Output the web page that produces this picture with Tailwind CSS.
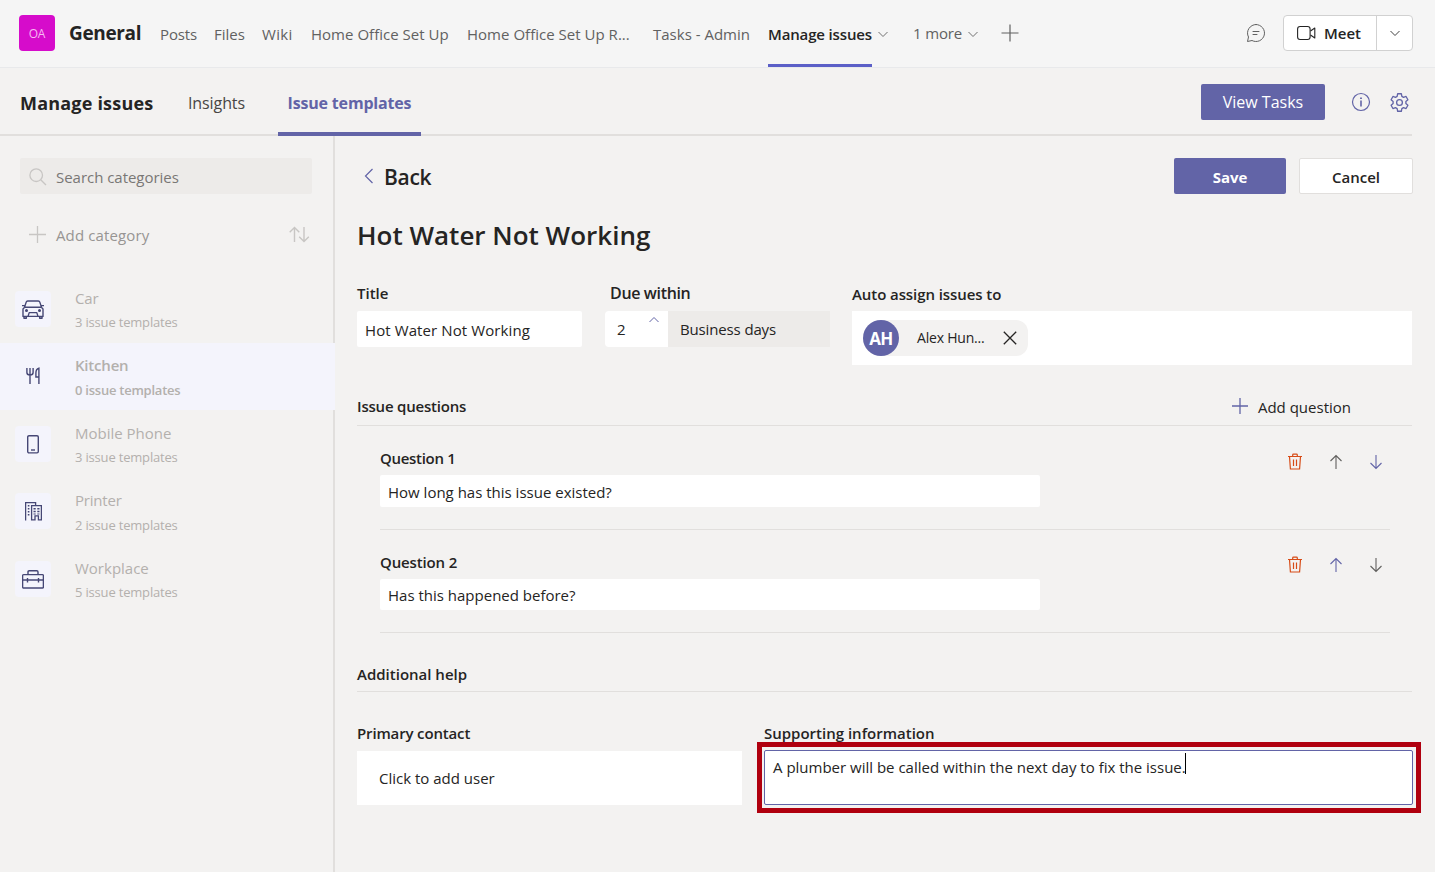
<!DOCTYPE html>
<html lang="en">
<head>
<meta charset="utf-8">
<title>Manage issues</title>
<script src="https://cdn.jsdelivr.net/npm/@tailwindcss/browser@4"></script>
</head>
<body class="flex h-[872px] w-[1435px] flex-col overflow-hidden bg-[#f3f2f1] font-['Open_Sans',sans-serif] text-[15px] leading-5 whitespace-nowrap text-[#252423]">

<header class="flex h-17 shrink-0 items-center border-b border-[#e8e9eb] bg-[#f5f5f5] pr-[22px] pl-[19px] text-[#616161]">
  <div class="mt-[-1px] flex size-9 items-center justify-center rounded bg-[#d60ccb] pt-[2px] text-[12px] tracking-[-0.3px] text-[#f6b8f2]">OA</div>
  <h1 class="-mt-[2px] ml-[14px] w-[91px] text-[19px] font-bold tracking-[-0.35px] text-[#242424]">General</h1>
  <nav class="flex h-full pt-6">
    <a class="w-[54px] tracking-[-0.14px]">Posts</a>
    <a class="w-12">Files</a>
    <a class="w-[49px] tracking-[0.3px]">Wiki</a>
    <a class="w-[156px] tracking-[0.02px]">Home Office Set Up</a>
    <a class="w-[186px] tracking-[0.02px]">Home Office Set Up R...</a>
    <a class="w-[115px]">Tasks - Admin</a>
    <a class="h-[43px] w-[104px] border-b-3 border-[#5b5fc7] font-semibold tracking-[-0.15px] text-[#242424]">Manage issues</a>
  </nav>
  <svg class="ml-[5px]" width="12" height="12" viewBox="0 0 12 12" fill="none" stroke="#707070"><path d="M1.500 4 6 8.500 10.500 4"/></svg>
  <span class="-mt-[1px] ml-[24px] w-[54px] tracking-[-0.16px]">1 more</span>
  <svg width="12" height="12" viewBox="0 0 12 12" fill="none" stroke="#707070"><path d="M1.500 4 6 8.500 10.500 4"/></svg>
  <svg class="-mt-[2px] ml-[22px]" width="18" height="18" viewBox="0 0 18 18" fill="none" stroke="#616161" stroke-width="1.200"><path d="M9 .5v17M.500 9h17"/></svg>
  <svg class="-mt-[1px] ml-auto" width="20" height="20" viewBox="0 0 20 20" fill="none" stroke="#616161" stroke-linecap="round" stroke-linejoin="round"><path d="M10 1.500a8.500 8.500 0 1 1-4 16L1.500 18.500l1-4.500A8.500 8.500 0 0 1 10 1.500ZM7 8.500h6M7 11.500h4"/></svg>
  <div class="-mt-[1px] ml-[17px] flex h-9 w-[130px] items-center rounded border border-[#d1d1d1] bg-white font-semibold text-[#242424]">
    <div class="flex h-full w-[93px] items-center border-r border-[#d1d1d1] pl-[13px]">
      <svg width="19" height="16" viewBox="0 0 19 16" fill="none" stroke="#242424" stroke-width="1.100" stroke-linejoin="round"><rect x=".6" y="1.500" width="12.500" height="13" rx="2.500"/><path d="m13.500 6 4.300-3v10l-4.300-3"/></svg>
      <span class="ml-2">Meet</span>
    </div>
    <svg class="ml-3" width="12" height="12" viewBox="0 0 12 12" fill="none" stroke="#424242"><path d="M1.500 4 6 8.500 10.500 4"/></svg>
  </div>
</header>

<div class="mr-[23px] flex h-17 shrink-0 items-center border-b-2 border-[#e1dfdd] pl-5">
  <h2 class="mt-1 w-[168px] text-[18px] font-bold tracking-[0.2px]">Manage issues</h2>
  <a class="mt-1 w-[90px] text-[16px] tracking-[-0.1px] text-[#484644]">Insights</a>
  <a class="-mb-[2px] flex h-16 w-[143px] items-center justify-center self-end border-b-4 border-[#6264a7] pt-[2px] text-[16px] font-bold tracking-[-0.18px] text-[#6264a7]">Issue templates</a>
  <button class="mt-[2px] ml-auto h-9 w-[124px] rounded-xs bg-[#6264a7] text-[16px] font-medium text-white">View Tasks</button>
  <svg class="mt-[2px] ml-[26px]" width="20" height="20" viewBox="0 0 20 20" fill="none" stroke="#6264a7" stroke-width="1.200"><circle cx="10" cy="10" r="8.500"/><path d="M10 8.500v6" stroke-width="1.600"/><path d="M10 5.500v1.600" stroke-width="1.800"/></svg>
  <svg class="mt-[2px] mr-[2px] ml-[18px]" width="21" height="21" viewBox="0 0 24 24" fill="none" stroke="#6264a7" stroke-width="1.500" stroke-linejoin="round"><circle cx="12" cy="12" r="3.300"/><path d="M9.900 2h4.200l.6 3 1.900 1.100 2.900-1 2.100 3.700-2.300 2v2.400l2.300 2-2.100 3.700-2.900-1-1.900 1.100-.6 3H9.900l-.6-3-1.900-1.100-2.900 1-2.100-3.700 2.300-2v-2.400l-2.300-2 2.100-3.700 2.900 1L9.300 5z"/></svg>
</div>

<div class="flex min-h-0 flex-1">
  <aside class="flex w-[335px] flex-col border-r-2 border-[#e1dfdd] pt-[22px] text-[#b3b0ad]">
    <div class="ml-5 flex h-9 w-[292px] items-center rounded-xs bg-[#edebe9] pl-[9px] text-[#797775]">
      <svg class="mt-px" width="18" height="18" viewBox="0 0 18 18" fill="none" stroke="#c8c6c4" stroke-width="1.300"><circle cx="7.200" cy="7.200" r="6.300"/><path d="m11.700 11.700 5.300 5.300"/></svg>
      <span class="mt-[2px] ml-[9px] tracking-[-0.03px]">Search categories</span>
    </div>
    <div class="mt-[31px] ml-[29px] flex h-5 w-[281px] items-center text-[#979593]">
      <svg width="18" height="18" viewBox="0 0 18 18" fill="none" stroke="#c8c6c4" stroke-width="1.300"><path d="M8.500 0v17M0 8.500h17"/></svg>
      <span class="ml-[9px] tracking-[0.12px]">Add category</span>
      <svg class="-mt-px ml-auto" width="21" height="17" viewBox="0 0 21 17" fill="none" stroke="#c8c6c4" stroke-width="1.400"><path d="M5.500 16V1.500M.7 6.300l4.800-4.800 4.800 4.800M15 1v14.500m-4.800-4.800 4.800 4.800 4.800-4.800"/></svg>
    </div>
    <ul class="mt-[30.500px]">
      <li class="flex h-[67.5px] pl-[15px]">
        <div class="mt-[15.500px] flex size-9 items-center justify-center rounded bg-[#f4f4fc]">
          <svg class="mt-[2px]" width="22" height="20" viewBox="0 0 22 20" fill="none" stroke="#464775" stroke-width="1.400" stroke-linejoin="round"><path d="M2.500 7.200 4.200 2.100Q4.500 1 5.700 1h10.600q1.200 0 1.500 1.100l1.700 5.100M0 5.600h2.600M19.400 5.600H22M2.600 7.200h16.800L21 9v7.400H1V9zM6 16.400l1.200-3.800h7.600l1.200 3.800"/><path d="M2 16.800v1.400h2.300v-1.400M17.700 16.800v1.400H20v-1.400" stroke-width="1.500"/><circle cx="4.500" cy="10.600" r=".8" fill="#464775"/><circle cx="17.500" cy="10.600" r=".8" fill="#464775"/></svg>
        </div>
        <div class="ml-6 pt-3"><p class="tracking-[-0.2px]">Car</p><p class="mt-1 text-[13px] tracking-[-0.18px]">3 issue templates</p></div>
      </li>
      <li class="-mr-[2px] flex h-[67px] mb-[.5px] bg-[#f4f4fc] pl-[15px] font-semibold">
        <div class="mt-[15px] flex size-9 items-center justify-center rounded bg-[#f4f4fc]">
          <svg class="-mt-px" width="14" height="18" viewBox="0 0 14 18" fill="none" stroke="#464775" stroke-width="1.400"><path d="M.9 1v4.500Q.9 8 4 8t3.100-2.500V1M4 1v16M12.900 17V1.200q-3 .8-3 4.800v4h3"/></svg>
        </div>
        <div class="ml-6 pt-3"><p class="tracking-[-0.2px]">Kitchen</p><p class="mt-[5px] text-[13px] tracking-[-0.24px]">0 issue templates</p></div>
      </li>
      <li class="flex h-[67.5px] pl-[15px]">
        <div class="mt-[15.500px] flex size-9 items-center justify-center rounded bg-[#f4f4fc]">
          <svg width="12" height="19" viewBox="0 0 12 19" fill="none" stroke="#464775" stroke-width="1.400"><rect x=".7" y=".7" width="10.600" height="17.200" rx="1.300"/><path d="M4 15h4"/></svg>
        </div>
        <div class="ml-6 pt-3"><p>Mobile Phone</p><p class="mt-1 text-[13px] tracking-[-0.18px]">3 issue templates</p></div>
      </li>
      <li class="flex h-[67.5px] pl-[15px]">
        <div class="mt-[15px] flex size-9 items-center justify-center rounded bg-[#f4f4fc]">
          <svg width="17" height="19" viewBox="0 0 17 19" fill="none" stroke="#464775" stroke-width="1.300"><path d="M.6 18.500V.6h10V3M6.600 18.500V3.600h9.800v14.300h-3v-4H10v4H6.600"/><path d="M3.600 3v12" stroke-width="1.600" stroke-dasharray="1.500 1.500"/><path d="M9.600 6v6.500M13.400 6v6.500" stroke-width="2.200" stroke-dasharray="1.500 1.300"/></svg>
        </div>
        <div class="ml-6 pt-3"><p class="tracking-[-0.2px]">Printer</p><p class="mt-[5px] text-[13px] tracking-[-0.18px]">2 issue templates</p></div>
      </li>
      <li class="flex h-[67.5px] pl-[15px]">
        <div class="mt-[15.500px] flex size-9 items-center justify-center rounded bg-[#f4f4fc]">
          <svg width="22" height="19" viewBox="0 0 22 19" fill="none" stroke="#464775" stroke-width="1.400"><rect x=".6" y="4.600" width="20.800" height="13.400" rx="1"/><path d="M6 4.500V2q0-1.200 1.200-1.200h7.600Q16 .8 16 2v2.500M.6 10h20.800M5.500 8v4.500M16.500 8v4.500"/></svg>
        </div>
        <div class="ml-6 pt-3"><p>Workplace</p><p class="mt-1 text-[13px] tracking-[-0.18px]">5 issue templates</p></div>
      </li>
    </ul>
  </aside>

  <main class="flex flex-1 flex-col pt-[22px] pr-[22px] pl-[22px]">
    <div class="flex h-9 items-center">
      <svg class="ml-[7px]" width="10" height="16" viewBox="0 0 10 16" fill="none" stroke="#6264a7" stroke-width="1.200"><path d="M8.500 1 1.500 8l7 7"/></svg>
      <span class="mt-[2px] ml-[10px] text-[21px] font-semibold tracking-[-0.3px]">Back</span>
      <button class="ml-auto h-9 w-28 rounded-xs bg-[#6264a7] pt-[2px] font-bold text-white">Save</button>
      <button class="ml-[13px] h-9 w-[114px] rounded-xs border border-[#e1dfdd] bg-white pt-[2px] font-semibold">Cancel</button>
    </div>
    <h3 class="mt-6 h-[35px] text-[26px] leading-[34px] font-semibold">Hot Water Not Working</h3>

    <div class="mt-[30px] flex h-[82px] items-start">
      <div class="w-[225px]">
        <p class="font-semibold">Title</p>
        <div class="mt-2 flex h-9 items-center rounded-xs bg-white pt-[2px] pl-2 tracking-[0.1px]">Hot Water Not Working</div>
      </div>
      <div class="ml-[23px] w-[225px]">
        <p class="pl-[5px] text-[16px] font-semibold tracking-[-0.35px]">Due within</p>
        <div class="mt-2 flex h-9">
          <div class="flex w-[63px] justify-between rounded-l bg-white pt-2 pr-2 pl-3">
            <span>2</span>
            <svg class="-mt-[3px]" width="12" height="7" viewBox="0 0 12 7" fill="none" stroke="#6264a7"><path d="m1.500 6 4.500-4.500L10.500 6"/></svg>
          </div>
          <div class="flex-1 bg-[#edebe9] pt-2 pl-3 tracking-[-0.14px]">Business days</div>
        </div>
      </div>
      <div class="ml-[22px] w-[560px] pt-px">
        <p class="font-semibold tracking-[-0.08px]">Auto assign issues to</p>
        <div class="mt-[7px] h-[54px] bg-white pt-[9px] pl-[11px]">
          <div class="flex h-9 w-[165px] items-center rounded-l-[18px] rounded-r-xl bg-[#f3f2f1]">
            <div class="flex size-9 items-center justify-center rounded-full bg-[#6264a7] pt-[2px] text-[17px] font-bold tracking-[-0.5px] text-white">AH</div>
            <span class="ml-[18px] w-[86px] text-[14px] tracking-[-0.2px]">Alex Hun...</span>
            <svg width="14" height="14" viewBox="0 0 14 14" fill="none" stroke="#252423" stroke-width="1.300"><path d="m.8.8 12.400 12.400m0-12.400L.8 13.200"/></svg>
          </div>
        </div>
      </div>
    </div>

    <div class="mt-[31px] mr-px flex h-[30px] border-b border-[#e1dfdd]">
      <span class="font-semibold tracking-[-0.2px]">Issue questions</span>
      <div class="mr-[61px] ml-auto flex">
        <svg class="mt-[2px] mr-[10px]" width="16" height="16" viewBox="0 0 16 16" fill="none" stroke="#6264a7" stroke-width="1.300"><path d="M8 0v16M0 8h16"/></svg>
        <span class="pt-px">Add question</span>
      </div>
    </div>

    <section class="mt-[22px] mr-[23px] ml-[23px] flex h-[82px] justify-between border-b border-[#e1dfdd]">
      <div class="w-[660px]">
        <p class="font-semibold tracking-[-0.3px]">Question 1</p>
        <div class="mt-[7px] flex h-8 items-center rounded-xs bg-white pt-[2px] pl-2">How long has this issue existed?</div>
      </div>
      <div class="mt-[5px] mr-2 flex">
        <svg width="14" height="18" viewBox="0 0 14 18" fill="none" stroke="#d74b16" stroke-width="1.200"><path d="M0 3.500h14M4.700 3.200V2q0-.8.8-.8h3q.8 0 .8.800v1.200M1.500 3.500l.9 12.500h9.200l.9-12.500M5.500 6.500V13M8.500 6.500V13"/></svg>
        <svg class="ml-7" width="12" height="18" viewBox="0 0 12 18" fill="none" stroke="#61605e" stroke-width="1.100"><path d="M6 16V2.500M.500 8 6 2.500 11.500 8"/></svg>
        <svg class="ml-7" width="12" height="18" viewBox="0 0 12 18" fill="none" stroke="#6264a7" stroke-width="1.100"><path d="M6 2v13.500M.500 10 6 15.500 11.500 10"/></svg>
      </div>
    </section>
    <section class="mt-[22px] mr-[23px] ml-[23px] flex h-[81px] justify-between border-b border-[#e1dfdd]">
      <div class="w-[660px]">
        <p class="font-semibold tracking-[-0.15px]">Question 2</p>
        <div class="mt-[7px] flex h-[31px] items-center rounded-xs bg-white pt-px pl-2">Has this happened before?</div>
      </div>
      <div class="mt-1 mr-2 flex">
        <svg width="14" height="18" viewBox="0 0 14 18" fill="none" stroke="#d74b16" stroke-width="1.200"><path d="M0 3.500h14M4.700 3.200V2q0-.8.8-.8h3q.8 0 .8.800v1.200M1.500 3.500l.9 12.500h9.200l.9-12.500M5.500 6.500V13M8.500 6.500V13"/></svg>
        <svg class="ml-7" width="12" height="18" viewBox="0 0 12 18" fill="none" stroke="#6264a7" stroke-width="1.100"><path d="M6 16V2.500M.500 8 6 2.500 11.500 8"/></svg>
        <svg class="ml-7" width="12" height="18" viewBox="0 0 12 18" fill="none" stroke="#61605e" stroke-width="1.100"><path d="M6 2v13.500M.500 10 6 15.500 11.500 10"/></svg>
      </div>
    </section>

    <p class="mt-[31px] mr-px h-7 border-b border-[#e1dfdd] font-semibold">Additional help</p>

    <div class="mt-[31px] flex">
      <div class="w-[385px]">
        <p class="font-semibold tracking-[-0.15px]">Primary contact</p>
        <div class="mt-2 flex h-[54px] items-center bg-white pl-[22px]">Click to add user</div>
      </div>
      <div class="ml-[22px] w-[649px]">
        <p class="font-semibold">Supporting information</p>
        <div class="relative mt-[7px] flex h-[55px] rounded-xs border border-[#6264a7] bg-white pt-[2px] pl-2">
          <span class="mt-1 h-5 ">A plumber will be called within the next day to fix the issue.</span>
          <i class="-ml-px h-[21px] w-px bg-black"></i>
          <div class="absolute -top-[9px] -left-2 h-[71px] w-[664px] border-5 border-[#b0000f]"></div>
        </div>
      </div>
    </div>
  </main>
</div>
</body>
</html>
